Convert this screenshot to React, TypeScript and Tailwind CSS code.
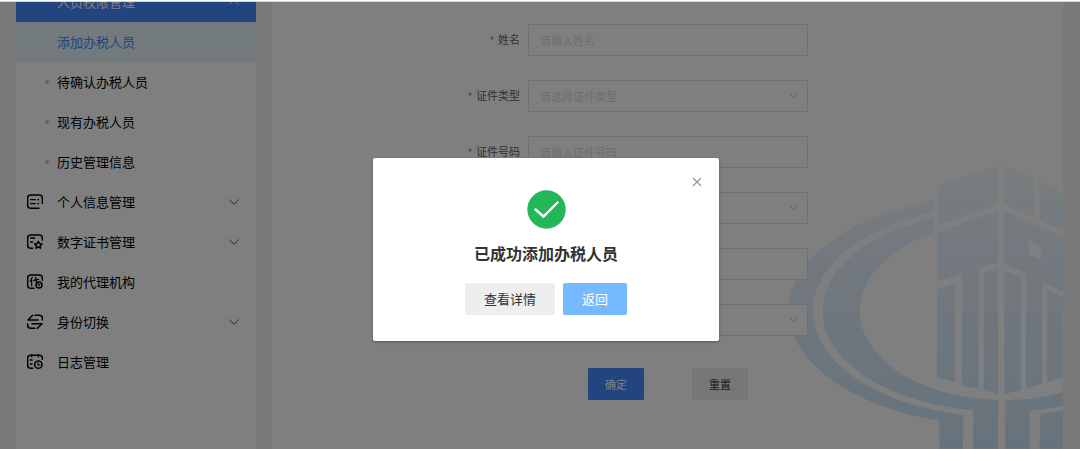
import type { ReactNode } from "react";
import { ChevronDown, ChevronUp } from "lucide-react";

const iconProps = {
  viewBox: "0 0 48 48",
  fill: "none",
  stroke: "currentColor",
  strokeWidth: 4.500,
  strokeLinecap: "round" as const,
  strokeLinejoin: "round" as const,
  className: "size-4 shrink-0",
  "aria-hidden": true,
};

const ProfileIcon = () => (
  <svg {...iconProps}>
    <path d="M46 28V12a9 9 0 0 0-9-9H11a9 9 0 0 0-9 9v22a9 9 0 0 0 9 9h25" />
    <path d="M11 17h14M32 17h3M11 29h14M32 29h3" strokeWidth={3.500} />
  </svg>
);

const CertificateIcon = () => (
  <svg {...iconProps}>
    <path d="M46 18v-6a9 9 0 0 0-9-9H11a9 9 0 0 0-9 9v22a9 9 0 0 0 9 9h6" />
    <path d="M11 12h12M11 24h6" />
    <path d="M34 22l3.5 6.5 7.500 1.300-5.300 5.200 1.100 7.500L34 39l-6.800 3.500 1.100-7.500L23 29.800l7.500-1.300z" />
  </svg>
);

const AgencyIcon = () => (
  <svg {...iconProps}>
    <path d="M46 19v-7a9 9 0 0 0-9-9H11a9 9 0 0 0-9 9v22a9 9 0 0 0 9 9h10" />
    <path d="M16 10l-6 12M14 18v17M20 19l15-3M26 9c0 8 1 14 3 17" strokeWidth={3.500} />
    <circle cx="36" cy="33" r="9" />
    <path d="M33 31h6M36 31v5" strokeWidth={3} />
  </svg>
);

const SwitchIcon = () => (
  <svg {...iconProps}>
    <path d="M17 4L3 18h30M24 4h13a9 9 0 0 1 9 9v5" />
    <path d="M31 43l14-14H15M24 43H11a9 9 0 0 1-9-9v-5" />
  </svg>
);

const LogIcon = () => (
  <svg {...iconProps}>
    <path d="M46 16v-3a9 9 0 0 0-9-9H11a9 9 0 0 0-9 9v21a9 9 0 0 0 9 9h6" />
    <path d="M14 1v7M34 1v7M10 18h5M10 30h5" />
    <circle cx="34" cy="32" r="11" />
    <path d="M33 27v6h6" strokeWidth={3.500} />
  </svg>
);

const subItems = ["待确认办税人员", "现有办税人员", "历史管理信息"];

const sections: { title: string; icon: ReactNode; expandable: boolean }[] = [
  { title: "个人信息管理", icon: <ProfileIcon />, expandable: true },
  { title: "数字证书管理", icon: <CertificateIcon />, expandable: true },
  { title: "我的代理机构", icon: <AgencyIcon />, expandable: false },
  { title: "身份切换", icon: <SwitchIcon />, expandable: true },
  { title: "日志管理", icon: <LogIcon />, expandable: false },
];

type FieldSpec = { id: string; label?: string; placeholder?: string; kind: "input" | "select" };

const fields: FieldSpec[] = [
  { id: "name", label: "姓名", placeholder: "请输入姓名", kind: "input" },
  { id: "id-type", label: "证件类型", placeholder: "请选择证件类型", kind: "select" },
  { id: "id-number", label: "证件号码", placeholder: "请输入证件号码", kind: "input" },
  { id: "extra-type", kind: "select" },
  { id: "extra-value", kind: "input" },
  { id: "extra-option", kind: "select" },
];

function Sidebar() {
  return (
    <nav className="w-60 shrink-0 bg-white text-[13px] text-black">
      <div className="-mt-5">
        <button className="flex h-10 w-full items-center justify-between bg-[#4488ff] pr-[13px] pl-[41px] text-white">
          人员权限管理
          <ChevronUp size={18} strokeWidth={1.2} aria-hidden />
        </button>
        <a href="#add" className="flex h-10 items-center bg-[#e6f4fd] pl-[41px] text-[#4488ff]">
          添加办税人员
        </a>
        {subItems.map((item) => (
          <a key={item} href="#sub" className="flex h-10 items-center gap-2 pl-[29px]">
            <span className="size-1 rounded-full bg-[#c8c8c8]" />
            {item}
          </a>
        ))}
        {sections.map(({ title, icon, expandable }) => (
          <button key={title} className="flex h-10 w-full items-center gap-[14px] pr-[13px] pl-[11px]">
            {icon}
            <span className="grow text-left">{title}</span>
            {expandable && <ChevronDown size={18} strokeWidth={1.2} color="#444" aria-hidden />}
          </button>
        ))}
      </div>
    </nav>
  );
}

function Watermark() {
  return (
    <svg viewBox="0 0 850 897" className="absolute right-0 bottom-0 h-[299px] w-[283px]" aria-hidden>
      <defs>
        <linearGradient id="fade" gradientUnits="userSpaceOnUse" x1="0" y1="40" x2="0" y2="897">
          <stop offset="0" stopColor="#f0fafe" />
          <stop offset="0.5" stopColor="#e0eefb" />
          <stop offset="1" stopColor="#cee6f8" />
        </linearGradient>
      </defs>
      <g fill="url(#fade)" fillRule="evenodd">
        <path d="M462 152A638 347 0 0 0 478 813V897H550V795A562 319 0 0 1 462 184Z" />
        <path d="M462 204A533 301 0 0 0 580 781V897H655V750A428 267 0 0 1 462 249Z" />
        <path d="M676 751Q770 750 850 726V768Q800 778 750 783V897H676Z" />
        <path d="M780 793L850 783V897H780Z" />
        <path d="M472 106L655 44V161L472 226Z" />
        <path d="M674 45L762 86V204L674 162Z" />
        <path d="M779 93L850 126V244L779 210Z" />
        <path d="M472 248L655 180V337L597 354V716L547 707V370L472 395Z" />
        <path d="M472 418L526 400V698L472 682Z" />
        <path d="M612 368L655 355V732L612 722Z" />
        <path d="M674 181L850 262V424L788 396V702L739 715V370L674 340ZM747 270V314L784 330V287Z" />
        <path d="M674 360L723 380V722L674 732Z" />
        <path d="M802 421L850 440V683L802 697Z" />
      </g>
    </svg>
  );
}

function Field({ id, label, placeholder, kind }: FieldSpec) {
  const box = "h-8 w-full rounded-[1px] border border-[#dcdfe6] bg-white px-[11px] text-[11px]";
  return (
    <div className="flex items-center gap-2">
      <label htmlFor={id} className="w-62 text-right text-[#606266]">
        {label && (
          <>
            <span className="mr-1 font-['Liberation_Sans',sans-serif] text-[#f56c6c]">*</span>
            {label}
          </>
        )}
      </label>
      <div className="relative w-70">
        {kind === "input" ? (
          <input id={id} placeholder={placeholder} className={`${box} placeholder:text-[#dcdcdc]`} />
        ) : (
          <>
            <select id={id} className={`${box} appearance-none text-[#dcdcdc]`}>
              <option>{placeholder}</option>
            </select>
            <ChevronDown
              size={16}
              strokeWidth={1.5}
              color="#c0c4cc"
              className="pointer-events-none absolute top-2 right-1.5"
              aria-hidden
            />
          </>
        )}
      </div>
    </div>
  );
}

function SuccessDialog() {
  return (
    <div className="absolute inset-0 flex items-start justify-center bg-black/50 pt-[156px] pl-3">
      <div
        role="dialog"
        aria-labelledby="dialog-title"
        className="relative flex w-[346px] flex-col items-center rounded-xs bg-white pt-8 pb-[26px] shadow-[0_1px_3px_rgba(0,0,0,0.3)]"
      >
        <button aria-label="关闭" className="absolute top-3 right-2.5 p-1 text-[#909399]">
          <svg viewBox="0 0 16 16" className="size-4" stroke="currentColor" strokeWidth="1.1" aria-hidden>
            <path d="M4 4l8 8M12 4l-8 8" />
          </svg>
        </button>
        <svg viewBox="0 0 39 39" className="size-[39px]" aria-hidden>
          <circle cx="19.5" cy="19.5" r="19.200" fill="#22b859" />
          <path
            d="M8.500 19.500L16.500 26.500L30.500 12.500"
            fill="none"
            stroke="#fff"
            strokeWidth="2.400"
            strokeLinecap="round"
          />
        </svg>
        <h2 id="dialog-title" className="mt-3 text-base leading-6 font-bold text-[#333]">
          已成功添加办税人员
        </h2>
        <div className="mt-[18px] flex gap-2 text-[13px]">
          <button className="h-8 rounded-xs bg-[#eeeeee] px-[19px] text-[#333]">查看详情</button>
          <button className="h-8 rounded-xs bg-[#77b9ff] px-[19px] text-white">返回</button>
        </div>
      </div>
    </div>
  );
}

export default function App() {
  return (
    <div className="flex min-h-screen flex-col bg-[#f4f4f4] font-['Noto_Sans_CJK_SC',sans-serif]">
      <div className="h-0.5 border-b border-[#d4d4d4] bg-white" />
      <main className="relative flex grow gap-4 overflow-hidden pr-[17px] pl-4">
        <Sidebar />
        <section className="relative grow bg-white pt-[22px] text-[11px]">
          <Watermark />
          <form className="relative flex flex-col gap-6">
            {fields.map((field) => (
              <Field key={field.id} {...field} />
            ))}
            <div className="mt-2 flex gap-12 pl-[316px]">
              <button type="button" className="h-8 w-14 rounded-[1px] bg-[#4488ff] text-white">
                确定
              </button>
              <button type="button" className="h-8 w-14 rounded-[1px] bg-[#eeeeee] text-[#333]">
                重置
              </button>
            </div>
          </form>
        </section>
        <SuccessDialog />
      </main>
    </div>
  );
}
